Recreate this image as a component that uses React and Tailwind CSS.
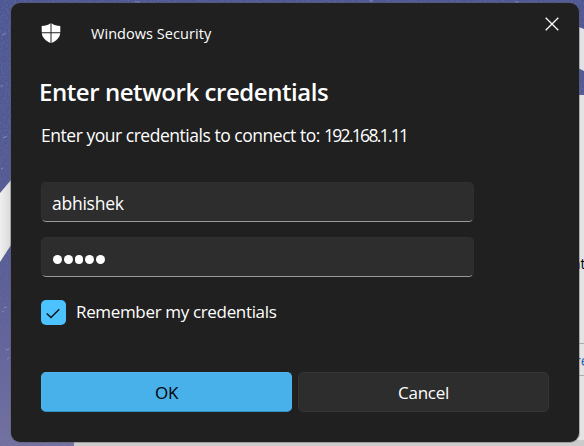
function Wallpaper() {
  return (
    <svg className="absolute inset-0 h-full w-full" viewBox="0 0 584 446" aria-hidden="true">
      <defs>
        <linearGradient id="sky" x1="0" y1="0" x2="0" y2="1">
          <stop offset="0" stopColor="#4d5691" />
          <stop offset="0.55" stopColor="#565b90" />
          <stop offset="0.8" stopColor="#67659a" />
          <stop offset="1" stopColor="#77739f" />
        </linearGradient>
        <linearGradient id="band" x1="0" y1="0" x2="1" y2="0">
          <stop offset="0" stopColor="#efefef" />
          <stop offset="1" stopColor="#d9d9da" />
        </linearGradient>
        <filter id="grain" x="0" y="0" width="100%" height="100%">
          <feTurbulence type="fractalNoise" baseFrequency="0.6" numOctaves="2" seed="4" />
          <feColorMatrix values="0 0 0 0 0.12  0 0 0 0 0.15  0 0 0 0 0.38  1.6 0 0 0 -0.62" />
        </filter>
      </defs>
      <rect width="584" height="446" fill="url(#sky)" />
      <rect width="584" height="446" filter="url(#grain)" />
      <path d="M0 193 L11 180 V245 L0 262Z" fill="url(#band)" />
      <path d="M576 26 L584 29 V71 L576 67Z" fill="#e2e2e4" />
      <rect x="576" y="95" width="8" height="351" fill="#e3e3e3" />
      <rect x="74" y="440" width="510" height="6" fill="#cbcbcb" />
      <path d="M576 343.500H584M576 375.500H584" stroke="#acacac" />
      <path d="M2 35l4-2M1 86h2M3 138l4-2M1 169l2-1M4 308l3-1M2 312l2-1M6 350l3-1M7 359l2-1M135 2h5M369 1h4M515 2h4" stroke="#9ba1c6" strokeWidth="0.700" />
    </svg>
  );
}

function Shield() {
  return (
    <svg className="h-[21px] w-[20px]" viewBox="0 0 20 21" fill="#fff" aria-hidden="true">
      <path d="M9.500 0.300C7.200 2 4 2.900 0.700 2.900V9.200H9.500Z" />
      <path d="M10.500 0.300C12.800 2 16 2.900 19.300 2.900V9.200H10.500Z" />
      <path d="M0.800 10.300H9.500V20C4.800 18 1.300 14.800 0.800 10.300Z" />
      <path d="M19.200 10.300H10.500V20C15.200 18 18.700 14.800 19.200 10.300Z" />
    </svg>
  );
}

function Field({ children }) {
  return (
    <div className="flex h-10 w-[433px] items-center rounded-[5px] border border-[#303030] border-b-[#9a9a9a] bg-[#2d2d2d] pl-[10px]">
      {children}
    </div>
  );
}

export default function App() {
  return (
    <div className="relative h-[446px] w-[584px] overflow-hidden bg-[#4d5691] font-['Open_Sans','Noto_Sans',sans-serif] text-white">
      <Wallpaper />
      <span className="absolute left-[572px] top-[253px] text-[14px] text-black">nt</span>
      <span className="absolute left-[575px] top-[350px] text-[14px] text-[#1763b5]">re</span>
      <main className="absolute left-[11px] top-[3px] flex h-[439px] w-[568px] flex-col rounded-[9px] bg-[#202020] pl-[30px] shadow-[0_0_0_1px_rgba(90,90,95,0.4)]">
        <header className="flex h-[60px] items-center">
          <Shield />
          <span className="ml-[30px] mt-px whitespace-nowrap text-[14.500px] leading-5 tracking-[0.050px]">Windows Security</span>
          <button className="mb-[19px] ml-auto mr-[20px]" aria-label="Close">
            <svg className="h-[14px] w-[14px]" viewBox="0 0 14 14" fill="none" stroke="#fff" strokeWidth="1.300">
              <path d="M0.700 0.700L13.300 13.300M13.300 0.700L0.700 13.300" />
            </svg>
          </button>
        </header>
        <h1 className="-ml-[2px] mt-[12px] h-[34px] whitespace-nowrap text-[24px] font-semibold leading-[34px] tracking-[-0.440px]">Enter network credentials</h1>
        <p className="mt-[13px] h-[27px] whitespace-nowrap text-[17.500px] leading-[26px] tracking-[-0.470px]">
          Enter your credentials to connect to: <span className="tracking-[-1.700px]">192.168.1.11</span>
        </p>
        <div className="mt-[33px] flex flex-col gap-[15px]">
          <Field>
            <span className="mt-[2px] text-[17.500px] leading-6 tracking-[-0.250px]">abhishek</span>
          </Field>
          <Field>
            <div className="ml-[1px] mt-[5px] flex gap-[2px]">
              {[0, 1, 2, 3, 4].map((dot) => (
                <span key={dot} className="h-[8.800px] w-[8.800px] rounded-full bg-white" />
              ))}
            </div>
          </Field>
        </div>
        <label className="mt-[23px] flex h-[25px] items-center">
          <span className="flex h-[25px] w-[25px] items-center justify-center rounded-[5px] bg-[#4cc2ff]">
            <svg className="-ml-px mt-px h-[11px] w-[14px]" viewBox="0 0 14 11" fill="none" stroke="#111" strokeWidth="1.400">
              <path d="M0.700 5.500L5 9.600L13.300 1.200" />
            </svg>
          </span>
          <span className="-mt-[2px] ml-[10px] whitespace-nowrap text-[17px] leading-6 tracking-[-0.340px]">Remember my credentials</span>
        </label>
        <div className="mt-[47px] flex gap-[6px]">
          <button className="h-10 w-[251px] rounded-[5px] border border-[#4fb5eb] border-b-[#3791c0] bg-[#48b1e9] pt-px text-[17px] tracking-[-0.300px] text-black">OK</button>
          <button className="h-10 w-[251px] rounded-[5px] border border-[#343434] bg-[#2d2d2d] pt-px text-[17px] tracking-[-0.300px] text-white">Cancel</button>
        </div>
      </main>
    </div>
  );
}
